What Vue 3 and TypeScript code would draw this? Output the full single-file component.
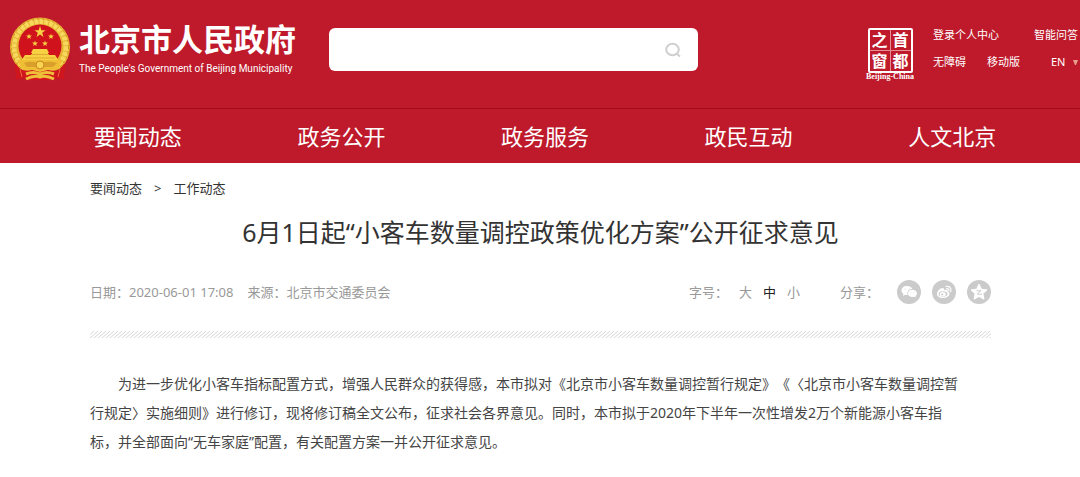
<script setup lang="ts">
import { ref } from 'vue'

interface SizeOption {
  label: string
  value: 'large' | 'medium' | 'small'
}

const navItems: string[] = ['要闻动态', '政务公开', '政务服务', '政民互动', '人文北京']
const sealChars: string[] = ['之', '首', '窗', '都']
const sizes: SizeOption[] = [
  { label: '大', value: 'large' },
  { label: '中', value: 'medium' },
  { label: '小', value: 'small' },
]
const lines: string[] = [
  '为进一步优化小客车指标配置方式，增强人民群众的获得感，本市拟对《北京市小客车数量调控暂行规定》《〈北京市小客车数量调控暂',
  '行规定〉实施细则》进行修订，现将修订稿全文公布，征求社会各界意见。同时，本市拟于2020年下半年一次性增发2万个新能源小客车指',
  '标，并全部面向“无车家庭”配置，有关配置方案一并公开征求意见。',
]
const current = ref<SizeOption['value']>('medium')
const keyword = ref('')
const language = ref('EN')
</script>

<template>
  <div class="page">
    <header class="header">
      <div class="top">
        <a class="brand" href="#">
          <svg class="emblem" viewBox="0 0 62 64" aria-hidden="true">
            <path d="M6 46 L56 46 L55 62 L46 61 L43 63 L19 63 L16 61 L7 62 Z" fill="#d3141c" />
            <ellipse cx="31" cy="30" rx="30" ry="29.500" fill="#e6b033" />
            <ellipse cx="31" cy="30" rx="26" ry="25.500" fill="none" stroke="#f6d95c" stroke-width="5" stroke-dasharray="4 1" />
            <ellipse cx="31" cy="30" rx="28.500" ry="28" fill="none" stroke="#cf9423" stroke-width="1" stroke-dasharray="2 3" />
            <ellipse cx="31" cy="29" rx="21.500" ry="21.500" fill="#cf121b" />
            <g fill="#f6d143">
              <path d="M31 9 L32.400 13.200 L36.600 13.200 L33.200 15.800 L34.500 20 L31 17.400 L27.500 20 L28.800 15.800 L25.400 13.200 L29.600 13.200 Z" />
              <path id="emblem-star" d="M20 16.500 L20.700 18.600 L23 18.600 L21.200 19.900 L21.900 22 L20 20.700 L18.100 22 L18.800 19.900 L17 18.600 L19.300 18.600 Z" />
              <use href="#emblem-star" x="22" />
              <use href="#emblem-star" x="6" y="7" />
              <use href="#emblem-star" x="16" y="7" />
              <path d="M24 32 L38 32 L40 36 L39 36 L39 38 L46 38 L50 44 L12 44 L16 38 L23 38 L23 36 L22 36 Z" />
            </g>
            <path d="M22 37.500 H40 M16 41 H46" stroke="#e0a92f" />
            <path d="M8 43 H54 L50 50 Q44 57 38 57 L24 57 Q18 57 12 50 Z" fill="#efbe35" />
            <path d="M15 46 Q24 43 30 47 Q38 43 48 46 L44 50 L36 50 L31 52 L26 50 L18 50 Z" fill="#d99f2b" />
            <circle cx="31" cy="48" r="4" fill="#f8d451" stroke="#c98521" />
            <path d="M7 47 Q12 56 23 53 L31 55 L39 53 Q50 56 55 47 L55 62 L49 60 L44 63 L40 58 L31 60 L22 58 L18 63 L13 60 L7 62 Z" fill="#cf151d" />
            <path d="M17 57 Q24 54 31 57 Q38 54 45 57 M17 62 Q25 58 31 60 Q37 58 45 62" fill="none" stroke="#f0bf3a" stroke-width="3" />
            <path d="M11 52 L13 60 M51 52 L49 60" stroke="#ec6b36" />
          </svg>
          <span class="brand-text">
            <span class="brand-name">北京市人民政府</span>
            <span class="brand-en">The People's Government of Beijing Municipality</span>
          </span>
        </a>

        <form class="search" role="search" @submit.prevent>
          <input v-model="keyword" type="text" aria-label="搜索" />
          <button type="submit" aria-label="搜索">
            <svg viewBox="0 0 18 18" width="18" height="18" aria-hidden="true">
              <ellipse cx="8.500" cy="8.500" rx="6.300" ry="5.800" />
              <path d="M12.500 12.500 L16 15.500" />
            </svg>
          </button>
        </form>

        <div class="tools">
          <a class="seal" href="#" aria-label="首都之窗">
            <span class="seal-grid">
              <span v-for="c in sealChars" :key="c">{{ c }}</span>
            </span>
            <span class="seal-caption">Beijing-China</span>
          </a>
          <div class="links">
            <div class="link-row">
              <a href="#">登录个人中心</a>
              <a href="#">智能问答</a>
            </div>
            <div class="link-row">
              <a href="#">无障碍</a>
              <a href="#">移动版</a>
              <span class="language">
                <select v-model="language" aria-label="Language">
                  <option>EN</option>
                </select>
                <svg viewBox="0 0 5 5" width="5" height="5" aria-hidden="true"><path d="M0 0 H5 L3 5 H2 Z" fill="#e8a08c" /></svg>
              </span>
            </div>
          </div>
        </div>
      </div>

      <nav class="nav">
        <a v-for="item in navItems" :key="item" href="#">{{ item }}</a>
      </nav>
    </header>

    <main class="content">
      <nav class="crumbs" aria-label="当前位置">
        <a href="#">要闻动态</a>
        <span>&gt;</span>
        <a href="#">工作动态</a>
      </nav>

      <h1>6月1日起“小客车数量调控政策优化方案”公开征求意见</h1>

      <div class="meta">
        <span class="date">日期：2020-06-01 17:08</span>
        <span>来源：北京市交通委员会</span>
        <div class="sizes">
          <span>字号：</span>
          <button
            v-for="s in sizes"
            :key="s.value"
            type="button"
            :class="{ active: current === s.value }"
            @click="current = s.value"
          >{{ s.label }}</button>
        </div>
        <div class="share">
          <span>分享：</span>
          <button type="button" aria-label="微信">
            <svg viewBox="0 0 24 24" aria-hidden="true">
              <circle cx="12" cy="12" r="12" fill="#cbcbcb" />
              <path d="M10 6 C6.700 6 4.500 8 4.500 10.500 C4.500 12 5.300 13.200 6.500 14 L6 16 L8.300 14.800 C9.300 15 10 15 10.700 14.900 C9.600 11.500 12 9 15.300 9 C14.600 7 12.500 6 10 6 Z" fill="#fff" />
              <path d="M15.300 9.800 C12.800 9.800 11 11.300 11 13.400 C11 15.500 12.900 17 15.300 17 L17 16.700 L18.800 17.600 L18.400 16 C19.400 15.300 20 14.400 20 13.400 C20 11.300 17.900 9.800 15.300 9.800 Z" fill="#fff" />
              <g fill="#cbcbcb"><circle cx="8" cy="9" r="0.500" /><circle cx="12" cy="9" r="0.500" /><circle cx="14" cy="12.500" r="0.400" /><circle cx="17" cy="12.500" r="0.400" /></g>
            </svg>
          </button>
          <button type="button" aria-label="微博">
            <svg viewBox="0 0 24 24" aria-hidden="true">
              <circle cx="12" cy="12" r="12" fill="#cbcbcb" />
              <path d="M10.500 8 C8 8 5 11.500 5 14 C5 16.500 7.800 18 11 18 C14.500 18 17.500 16 17.500 13.700 C17.500 12.300 16.500 11.700 15.500 11.400 C16 9.700 14.500 9.300 12 10.200 C12.400 8.800 11.800 8 10.500 8 Z" fill="#fff" />
              <ellipse cx="11" cy="14" rx="4.400" ry="2.800" fill="#cbcbcb" />
              <ellipse cx="10.700" cy="14.200" rx="3" ry="2.300" fill="#fff" />
              <circle cx="10.200" cy="14.500" r="1" fill="#cbcbcb" />
              <path d="M14 6.500 C17.500 5.600 20 8.500 18.800 11.600 M14.600 8.800 C16.200 8.400 17.300 9.500 16.900 11" fill="none" stroke="#fff" stroke-width="1.200" stroke-linecap="round" />
            </svg>
          </button>
          <button type="button" aria-label="QQ空间">
            <svg viewBox="0 0 24 24" aria-hidden="true">
              <circle cx="12" cy="12" r="12" fill="#cbcbcb" />
              <path d="M12 4 L14.400 9.200 L20 9.900 L15.900 13.700 L17 19.200 L12 16.500 L7 19.200 L8.100 13.700 L4 9.900 L9.600 9.200 Z" fill="#fff" stroke="#fff" stroke-linejoin="round" />
              <path d="M9.500 10.800 H14 L10.300 13.900 C12 14.500 13.500 14.500 15 14" fill="none" stroke="#cbcbcb" />
            </svg>
          </button>
        </div>
      </div>

      <svg class="divider" aria-hidden="true">
        <defs>
          <pattern id="hatch" width="4" height="7" patternUnits="userSpaceOnUse">
            <path d="M-4 7 L4 0 M0 7 L8 0 M-8 7 L0 0" stroke="#d8d8d8" />
          </pattern>
        </defs>
        <rect width="100%" height="7" fill="url(#hatch)" />
      </svg>

      <p class="article">
        <template v-for="(line, i) in lines" :key="i"><br v-if="i > 0" />{{ line }}</template>
      </p>
    </main>
  </div>
</template>

<style>
body {
  margin: 0;
  background: #fff;
}
</style>

<style scoped>
.page {
  font-family: "Noto Sans", "Noto Sans CJK SC", sans-serif;
  font-size: 13px;
  color: #333;
  text-spacing-trim: space-all;
}

a {
  color: inherit;
  text-decoration: none;
}

button,
input,
select {
  margin: 0;
  padding: 0;
  border: 0;
  background: none;
  color: inherit;
  font: inherit;
}

button {
  cursor: pointer;
}

.header {
  background: #be1a2b;
  color: #fff;
}

.top {
  display: flex;
  align-items: flex-start;
  min-height: 108px;
  border-bottom: 1px solid #a00d1c;
}

.brand {
  display: flex;
  flex: none;
  gap: 8px;
  padding: 17px 0 0 9px;
}

.emblem {
  width: 62px;
  height: 64px;
}

.brand-text {
  display: flex;
  flex-direction: column;
  width: 220px;
  padding-top: 3px;
  white-space: nowrap;
}

.brand-name {
  font-size: 31px;
  font-weight: 700;
  line-height: 38px;
}

.brand-en {
  font-family: Roboto, "Noto Sans", sans-serif;
  font-size: 10px;
  line-height: 22px;
}

.search {
  display: flex;
  flex: 0 1 369px;
  height: 43px;
  margin: 28px 0 0 30px;
  border-radius: 6px;
  background: #fff;
}

.search input {
  flex: 1;
  min-width: 0;
  padding-left: 12px;
  color: #333;
  outline: none;
}

.search button {
  width: 50px;
  display: grid;
  place-items: center;
}

.search svg {
  fill: none;
  stroke: #cfcfcf;
  stroke-width: 2;
}

.tools {
  display: flex;
  flex: none;
  gap: 19px;
  margin-left: auto;
  padding: 24px 2px 0 0;
}

.seal {
  display: flex;
  flex-direction: column;
  align-items: center;
  width: 48px;
  padding-top: 4px;
}

.seal-grid {
  display: grid;
  grid-template-columns: 20px 20px;
  grid-auto-rows: 20px;
  gap: 1px;
  border: 2px solid #fff;
  border-radius: 2px;
  background: linear-gradient(#e58d93, #e58d93) center / 1px 100% no-repeat,
    linear-gradient(#e58d93, #e58d93) center / 100% 1px no-repeat;
  font-size: 16px;
  font-weight: 700;
  line-height: 20px;
  text-align: center;
}

.seal-caption {
  font-family: "Liberation Serif", serif;
  font-size: 8px;
  font-weight: 700;
  line-height: 8px;
  white-space: nowrap;
}

.links {
  width: 145px;
  font-size: 11px;
}

.link-row {
  display: flex;
  justify-content: space-between;
  height: 27px;
  line-height: 22px;
}

.language {
  display: flex;
  align-items: center;
  height: 22px;
  gap: 7px;
  margin-left: 10px;
}

.language select {
  appearance: none;
  line-height: 22px;
}

.nav {
  display: grid;
  grid-template-columns: repeat(5, 1fr);
  padding: 0 26px 0 36px;
  font-size: 22px;
  line-height: 54px;
  text-align: center;
}

.content {
  padding: 0 89px 0 90px;
}

.crumbs {
  display: flex;
  gap: 12px;
  padding-top: 15px;
  line-height: 20px;
}

h1 {
  margin: 15px 0 0;
  font-size: 25px;
  font-weight: 400;
  line-height: 38px;
  text-align: center;
}

.meta {
  display: flex;
  align-items: center;
  height: 24px;
  margin-top: 29px;
  color: #999;
  line-height: 24px;
}

.date {
  margin-right: 14px;
}

.sizes {
  display: flex;
  gap: 11px;
  margin-left: auto;
}

.sizes .active {
  color: #222;
}

.share {
  display: flex;
  align-items: center;
  gap: 11px;
  margin-left: 40px;
}

.share span {
  margin-right: 7px;
}

.share button,
.share svg {
  display: block;
  width: 24px;
  height: 24px;
}

.divider {
  display: block;
  width: 100%;
  height: 7px;
  margin-top: 27px;
}

.article {
  margin: 31px 0 0;
  color: #444;
  font-size: 14px;
  line-height: 29px;
  text-indent: 2em;
}
</style>
